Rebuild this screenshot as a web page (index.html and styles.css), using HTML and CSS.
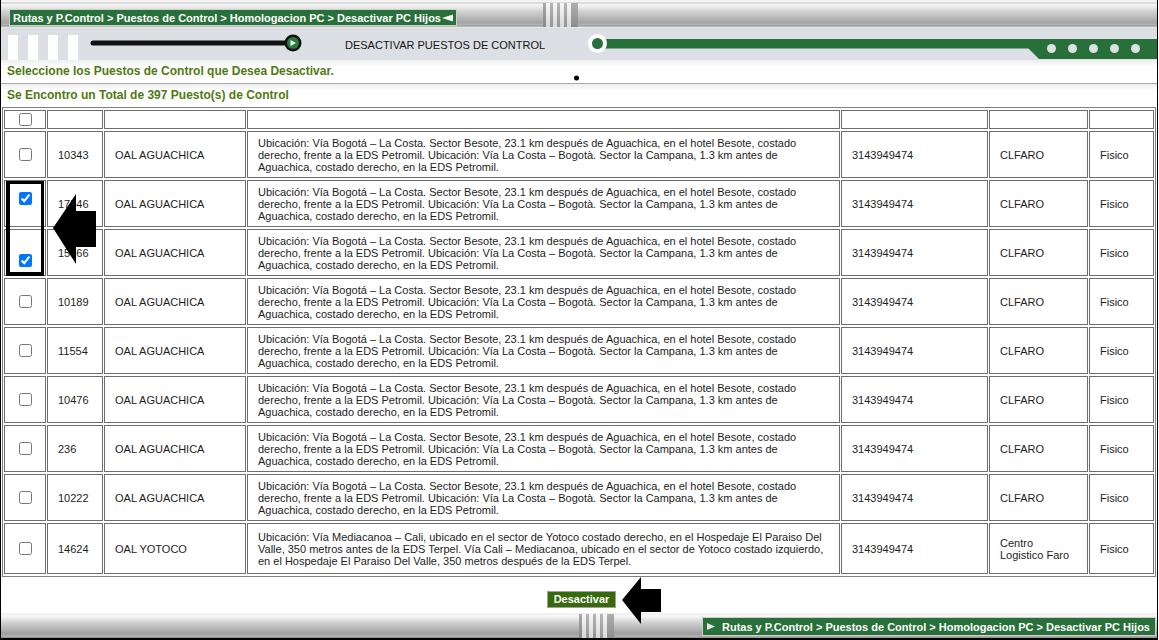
FILE: index.html
```html
<!DOCTYPE html>
<html lang="es">
<head>
<meta charset="utf-8">
<title>Desactivar Puestos de Control</title>
<link rel="stylesheet" href="styles.css">
</head>
<body>
<div class="page">
  <header class="topbar">
    <div class="crumb crumb-top">
      <span class="crumb-text">Rutas y P.Control &gt; Puestos de Control &gt; Homologacion PC &gt; Desactivar PC Hijos</span>
      <svg class="tri" width="11" height="8" viewBox="0 0 11 8"><polygon points="0,4 11,0.5 11,7.5" fill="#fff"/></svg>
    </div>
    <div class="grooves grooves-top"></div>
  </header>

  <div class="titlebar">
    <div class="bars"><span></span><span></span><span></span><span></span></div>
    <svg class="slider" width="220" height="30" viewBox="0 0 220 30">
      <line x1="9" y1="13" x2="205" y2="13" stroke="#111" stroke-width="5" stroke-linecap="round"/>
      <circle cx="209" cy="13" r="8.5" fill="#111"/>
      <circle cx="209" cy="13" r="6" fill="#2b7a3e"/>
      <polygon points="206.5,10 206.5,16 212,13" fill="#fff"/>
    </svg>
    <div class="title">DESACTIVAR PUESTOS DE CONTROL</div>
    <svg class="greenline" width="569" height="30" viewBox="0 0 569 30">
      <rect x="13" y="9" width="556" height="9.5" fill="#27703a"/>
      <polygon points="439,17 451,29 569,29 569,17" fill="#27703a"/>
      <circle cx="9.5" cy="13.5" r="9.5" fill="#fff"/>
      <circle cx="9.5" cy="13.5" r="5.5" fill="#27703a"/>
      <circle cx="463.5" cy="18.5" r="4.5" fill="#dde0e3"/>
      <circle cx="484.5" cy="18.5" r="4.5" fill="#dde0e3"/>
      <circle cx="505.5" cy="18.5" r="4.5" fill="#dde0e3"/>
      <circle cx="526.5" cy="18.5" r="4.5" fill="#dde0e3"/>
      <circle cx="547.5" cy="18.5" r="4.5" fill="#dde0e3"/>
    </svg>
  </div>

  <div class="msg msg1">Seleccione los Puestos de Control que Desea Desactivar.</div>
  <div class="msg msg2">Se Encontro un Total de 397 Puesto(s) de Control</div>

  <table class="grid">
    <colgroup>
      <col class="w-chk"><col class="w-id"><col class="w-name"><col class="w-desc"><col class="w-tel"><col class="w-emp"><col class="w-tipo">
    </colgroup>
    <tr class="head">
      <th class="c-chk"><input type="checkbox"></th><th></th><th></th><th></th><th></th><th></th><th></th>
    </tr>
    <tr class="row">
      <td class="c-chk"><input type="checkbox"></td>
      <td>10343</td><td>OAL AGUACHICA</td>
      <td>Ubicación: Vía Bogotá – La Costa. Sector Besote, 23.1 km después de Aguachica, en el hotel Besote, costado derecho, frente a la EDS Petromil. Ubicación: Vía La Costa – Bogotà. Sector la Campana, 1.3 km antes de Aguachica, costado derecho, en la EDS Petromil.</td>
      <td>3143949474</td><td>CLFARO</td><td>Fisico</td>
    </tr>
    <tr class="row">
      <td class="c-chk c-top"><input type="checkbox" checked></td>
      <td>17546</td><td>OAL AGUACHICA</td>
      <td>Ubicación: Vía Bogotá – La Costa. Sector Besote, 23.1 km después de Aguachica, en el hotel Besote, costado derecho, frente a la EDS Petromil. Ubicación: Vía La Costa – Bogotà. Sector la Campana, 1.3 km antes de Aguachica, costado derecho, en la EDS Petromil.</td>
      <td>3143949474</td><td>CLFARO</td><td>Fisico</td>
    </tr>
    <tr class="row">
      <td class="c-chk c-bot"><input type="checkbox" checked></td>
      <td>15366</td><td>OAL AGUACHICA</td>
      <td>Ubicación: Vía Bogotá – La Costa. Sector Besote, 23.1 km después de Aguachica, en el hotel Besote, costado derecho, frente a la EDS Petromil. Ubicación: Vía La Costa – Bogotà. Sector la Campana, 1.3 km antes de Aguachica, costado derecho, en la EDS Petromil.</td>
      <td>3143949474</td><td>CLFARO</td><td>Fisico</td>
    </tr>
    <tr class="row">
      <td class="c-chk"><input type="checkbox"></td>
      <td>10189</td><td>OAL AGUACHICA</td>
      <td>Ubicación: Vía Bogotá – La Costa. Sector Besote, 23.1 km después de Aguachica, en el hotel Besote, costado derecho, frente a la EDS Petromil. Ubicación: Vía La Costa – Bogotà. Sector la Campana, 1.3 km antes de Aguachica, costado derecho, en la EDS Petromil.</td>
      <td>3143949474</td><td>CLFARO</td><td>Fisico</td>
    </tr>
    <tr class="row">
      <td class="c-chk"><input type="checkbox"></td>
      <td>11554</td><td>OAL AGUACHICA</td>
      <td>Ubicación: Vía Bogotá – La Costa. Sector Besote, 23.1 km después de Aguachica, en el hotel Besote, costado derecho, frente a la EDS Petromil. Ubicación: Vía La Costa – Bogotà. Sector la Campana, 1.3 km antes de Aguachica, costado derecho, en la EDS Petromil.</td>
      <td>3143949474</td><td>CLFARO</td><td>Fisico</td>
    </tr>
    <tr class="row">
      <td class="c-chk"><input type="checkbox"></td>
      <td>10476</td><td>OAL AGUACHICA</td>
      <td>Ubicación: Vía Bogotá – La Costa. Sector Besote, 23.1 km después de Aguachica, en el hotel Besote, costado derecho, frente a la EDS Petromil. Ubicación: Vía La Costa – Bogotà. Sector la Campana, 1.3 km antes de Aguachica, costado derecho, en la EDS Petromil.</td>
      <td>3143949474</td><td>CLFARO</td><td>Fisico</td>
    </tr>
    <tr class="row">
      <td class="c-chk"><input type="checkbox"></td>
      <td class="id-alt">236</td><td>OAL AGUACHICA</td>
      <td>Ubicación: Vía Bogotá – La Costa. Sector Besote, 23.1 km después de Aguachica, en el hotel Besote, costado derecho, frente a la EDS Petromil. Ubicación: Vía La Costa – Bogotà. Sector la Campana, 1.3 km antes de Aguachica, costado derecho, en la EDS Petromil.</td>
      <td>3143949474</td><td>CLFARO</td><td>Fisico</td>
    </tr>
    <tr class="row">
      <td class="c-chk"><input type="checkbox"></td>
      <td>10222</td><td>OAL AGUACHICA</td>
      <td>Ubicación: Vía Bogotá – La Costa. Sector Besote, 23.1 km después de Aguachica, en el hotel Besote, costado derecho, frente a la EDS Petromil. Ubicación: Vía La Costa – Bogotà. Sector la Campana, 1.3 km antes de Aguachica, costado derecho, en la EDS Petromil.</td>
      <td>3143949474</td><td>CLFARO</td><td>Fisico</td>
    </tr>
    <tr class="row last">
      <td class="c-chk"><input type="checkbox"></td>
      <td>14624</td><td>OAL YOTOCO</td>
      <td>Ubicación: Vía Mediacanoa – Cali, ubicado en el sector de Yotoco costado derecho, en el Hospedaje El Paraiso Del Valle, 350 metros antes de la EDS Terpel. Vía Cali – Mediacanoa, ubicado en el sector de Yotoco costado izquierdo, en el Hospedaje El Paraiso Del Valle, 350 metros después de la EDS Terpel.</td>
      <td>3143949474</td><td>Centro Logistico Faro</td><td>Fisico</td>
    </tr>
  </table>

  <div class="actions"><button class="btn" type="button">Desactivar</button></div>

  <footer class="botbar">
    <div class="grooves grooves-bot"></div>
    <div class="crumb crumb-bot">
      <svg class="tri-r" width="8" height="7" viewBox="0 0 8 7"><polygon points="0,0 8,3.5 0,7" fill="#e4e4e4"/></svg>
      <span class="crumb-text">Rutas y P.Control &gt; Puestos de Control &gt; Homologacion PC &gt; Desactivar PC Hijos</span>
    </div>
  </footer>

  <svg class="overlay" width="1159" height="640" viewBox="0 0 1159 640">
    <path d="M6 181 H44 V276 H6 Z M10 184 V272 H41 V184 Z" fill="#000" fill-rule="evenodd"/>
    <polygon points="53,228 76,194 76,211 96,211 96,247 76,247 76,264" fill="#000"/>
    <polygon points="622,600 641,577 641,589 661,589 661,612 641,612 641,624" fill="#000"/>
    <circle cx="576.5" cy="78" r="2.5" fill="#000"/>
  </svg>
</div>
</body>
</html>
```

FILE: styles.css
```css
* { box-sizing: border-box; }

html, body {
  margin: 0;
  padding: 0;
  background: #fff;
}

body {
  font-family: "Liberation Sans", Arial, sans-serif;
  color: #1d1d1d;
}

.page {
  position: relative;
  width: 1158px;
  height: 640px;
  border-left: 1px solid #000;
  border-right: 1px solid #000;
  border-bottom: 2px solid #000;
  display: flex;
  flex-direction: column;
  overflow: hidden;
}

/* ---------- top metallic bar ---------- */
.topbar {
  flex: none;
  height: 30px;
  display: flex;
  align-items: flex-start;
  background: linear-gradient(to bottom,
    #f3f3f3 0, #f3f3f3 2px, #c4c4c4 3px, #f7f7f7 4px, #ebebeb 7px,
    #d3d3d3 11px, #c3c3c3 15px, #b3b3b3 19px, #a3a3a3 23px, #b9b9b9 25px,
    #8a8a8a 26px, #e8e8e8 27px, #e2e5e8 28px, #d4d7da 29px, #dcdfe3 30px);
}

.crumb {
  display: flex;
  align-items: center;
  background: #27703a;
  border: 1px solid #cfcfcf;
  color: #fff;
  font-weight: bold;
  font-size: 11px;
  line-height: 14px;
  white-space: nowrap;
}

.crumb-top {
  margin: 9px 0 0 8px;
  width: 448px;
  height: 17px;
  padding-left: 3px;
}

.crumb-top .tri { margin-left: 1px; }

.grooves {
  width: 35px;
  height: 24px;
  background:
    linear-gradient(to bottom, rgba(255,255,255,0.15), rgba(0,0,0,0.12)),
    linear-gradient(90deg,
      #9a9a9a 0 3px, #f6f6f6 3px 7px, #a9a9a9 7px 10px, #f6f6f6 10px 14px,
      #a9a9a9 14px 17px, #f6f6f6 17px 21px, #a9a9a9 21px 24px, #f6f6f6 24px 28px,
      #a0a0a0 28px 35px);
}

.grooves-top {
  margin: 3px 0 0 86px;
}

/* ---------- title bar ---------- */
.titlebar {
  flex: none;
  height: 30px;
  display: flex;
  align-items: stretch;
  background: #dcdfe3;
}

.bars {
  display: flex;
  align-items: flex-end;
  gap: 10px;
  padding-left: 7px;
}

.bars span {
  display: block;
  width: 10px;
  height: 25px;
  background: #fff;
}

.slider {
  display: block;
  margin-left: 6px;
}

.title {
  margin-left: 41px;
  font-size: 11px;
  line-height: 30px;
  color: #141414;
  white-space: nowrap;
}

.greenline {
  display: block;
  margin-left: auto;
}

/* ---------- messages ---------- */
.msg {
  flex: none;
  padding-left: 6px;
  font-size: 12px;
  font-weight: bold;
  color: #4f7a12;
  background: linear-gradient(to bottom, #eeeeee 0, #ffffff 7px);
}

.msg1 {
  height: 24px;
  line-height: 23px;
  border-bottom: 1px solid #a8a8a8;
}

.msg2 {
  height: 23px;
  line-height: 23px;
}

/* ---------- grid ---------- */
.grid {
  flex: none;
  width: 1154px;
  margin-left: 1px;
  border: 1px solid #808080;
  border-spacing: 1px 2px;
  table-layout: fixed;
  font-size: 11px;
  line-height: 12px;
  color: #1d1d1d;
}

.w-chk { width: 42px; }
.w-id { width: 56px; }
.w-name { width: 142px; }
.w-desc { width: 593px; }
.w-tel { width: 147px; }
.w-emp { width: 99px; }
.w-tipo { width: 65px; }

.grid th,
.grid td {
  border: 1px solid #6e6e6e;
  padding: 0 10px;
  text-align: left;
  vertical-align: middle;
  font-weight: normal;
}

.grid .head th {
  height: 19px;
  padding: 0;
}

.grid .row td { height: 47px; }
.grid .row.last td { height: 51px; }

.grid .c-chk {
  padding: 0;
  text-align: center;
}

.grid input[type="checkbox"] {
  display: block;
  width: 13px;
  height: 13px;
  margin: 0 auto;
}

.grid .c-top {
  vertical-align: top;
  padding-top: 11px;
}

.grid .c-bot {
  vertical-align: bottom;
  padding-bottom: 8px;
}

/* ---------- actions ---------- */
.actions {
  flex: none;
  height: 36px;
  padding: 14px 0 0 5px;
  display: flex;
  justify-content: center;
  align-items: flex-start;
}

.btn {
  height: 17px;
  padding: 0 6px;
  border: 1px solid #a0a0a0;
  background: #356b0b;
  color: #fff;
  font-family: "Liberation Sans", Arial, sans-serif;
  font-weight: bold;
  font-size: 11px;
  line-height: 15px;
}

/* ---------- bottom bar ---------- */
.botbar {
  flex: none;
  height: 25px;
  display: flex;
  align-items: flex-start;
  background: linear-gradient(to bottom,
    #ededed 0, #f8f8f8 3px, #e6e6e6 6px, #cfcfcf 10px, #bdbdbd 14px,
    #ababab 18px, #9d9d9d 21px, #b4b4b4 23px, #8c8c8c 25px);
}

.grooves-bot {
  margin: 1px 0 0 578px;
  height: 24px;
}

.crumb-bot {
  margin: 4px 1px 0 auto;
  width: 454px;
  height: 19px;
  padding-left: 4px;
}

.crumb-bot .tri-r { margin-right: 7px; flex: none; }

/* ---------- overlay annotations ---------- */
.overlay {
  position: absolute;
  top: 0;
  left: -1px;
  pointer-events: none;
}
```
